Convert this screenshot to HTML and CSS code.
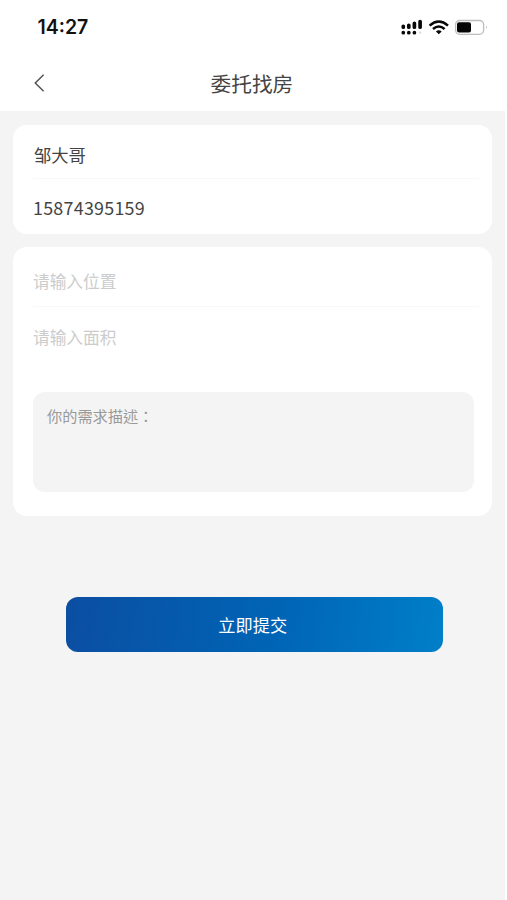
FILE: index.html
```html
<!DOCTYPE html>
<html lang="zh-CN">
<head>
<meta charset="utf-8">
<title>委托找房</title>
<link rel="stylesheet" href="styles.css">
</head>
<body>
<div class="screen">
  <header class="top">
    <div class="status">
      <span class="time">14:27</span>
      <svg class="indicators" width="88" height="20" viewBox="0 0 88 20">
        <g stroke="#080808" stroke-width="3.7" stroke-linecap="round">
          <path d="M3.3 9.3v.9M8.8 8.3v1.9M14.4 6.4v3.8M20.1 4.6v5.6"/>
          <path d="M3.3 15.7h.01M8.8 15.7h.01M14.4 15.7h.01"/>
        </g>
        <circle cx="20.1" cy="15.7" r="1.2" fill="#ddd"/>
        <g fill="none" stroke="#080808" stroke-width="2.5">
          <path d="M29.6 8.6Q38.8 .4 48 8.6"/>
          <path d="M33 12Q38.8 7 44.6 12"/>
        </g>
        <path d="M35.9 14.4Q38.8 12.1 41.7 14.4L38.8 17.2Z" fill="#080808"/>
        <rect x="55.6" y="3.5" width="28" height="13.8" rx="4" fill="#fff" stroke="#bdbdbd" stroke-width="1.3"/>
        <rect x="57" y="5.2" width="14" height="10.4" rx="2" fill="#050505"/>
        <path d="M86 8.5q1.4 1.7 0 3.4z" fill="#999"/>
      </svg>
    </div>
    <nav class="nav">
      <svg class="back" width="12" height="20" viewBox="0 0 12 20">
        <path d="M10.6 1.8L2.3 10L10.6 18.2" fill="none" stroke="#555" stroke-width="1.5"/>
      </svg>
      <h1 class="title">委托找房</h1>
    </nav>
  </header>
  <form class="form">
    <section class="card contact">
      <input class="field name" type="text" value="邹大哥">
      <input class="field phone" type="text" value="15874395159">
    </section>
    <section class="card needs">
      <input class="field place" type="text" placeholder="请输入位置">
      <input class="field area" type="text" placeholder="请输入面积">
      <textarea class="desc" lang="zh-Hant" placeholder="你的需求描述："></textarea>
    </section>
    <button class="submit" type="button">立即提交</button>
  </form>
</div>
</body>
</html>
```

FILE: styles.css
```css
* { box-sizing: border-box; }

body {
  margin: 0;
  background: #fff;
  color: #444;
  font-family: "Noto Sans CJK SC", sans-serif;
  overflow: hidden;
}

.screen {
  width: 505px;
  height: 900px;
  background: #f4f4f4;
}

.top {
  height: 111px;
  background: #fff;
}

.status {
  display: flex;
  justify-content: space-between;
  align-items: center;
  height: 54px;
  padding: 0 17px 0 37.5px;
}

.time {
  font: 600 19.5px/24px Inter, sans-serif;
  color: #111;
}

.nav {
  display: flex;
  align-items: center;
  height: 58px;
  padding-left: 33px;
}

.title {
  margin: 0 0 0 165.5px;
  font-size: 20.7px;
  line-height: 30px;
  font-weight: 400;
  color: #444;
}

.form {
  display: flex;
  flex-direction: column;
  gap: 13px;
  padding: 14px 13.5px 0 13px;
}

.card {
  display: flex;
  flex-direction: column;
  padding: 0 13px 0 20px;
  background: #fff;
  border-radius: 14px;
}

.contact { height: 108.5px; }
.needs { height: 269px; }

.field {
  width: 100%;
  padding: 0;
  border: 0;
  outline: 0;
  background: none;
  font-family: inherit;
  font-size: 16.7px;
  color: #444;
}

.field::placeholder { color: #ccc; opacity: 1; }

.name {
  height: 54px;
  padding: 5px 0 0 1px;
  border-bottom: 1px solid #f8f8f8;
  font-size: 17.3px;
}

.phone {
  height: 54px;
  padding-top: 1px;
  font-size: 17.9px;
  letter-spacing: .25px;
}

.place {
  height: 60px;
  padding-top: 10px;
  border-bottom: 1px solid #f8f8f8;
}

.area {
  height: 62px;
  padding-bottom: 2px;
}

.desc {
  width: 441px;
  height: 100px;
  margin-top: 23.5px;
  padding: 11px 14px;
  border: 0;
  outline: 0;
  border-radius: 12px;
  background: #f4f4f4;
  font: 15.2px/24px "Noto Sans CJK TC", sans-serif;
  resize: none;
}

.desc::placeholder { color: #999; opacity: 1; }

.submit {
  width: 376.5px;
  height: 55px;
  margin: 68.5px 0 0 53px;
  padding: 0 3px 0 0;
  border: 0;
  border-radius: 12px;
  background: linear-gradient(97deg, #0b4ea2, #0064b5 55%, #007fc8);
  color: #fff;
  font: 17.2px/26px "Noto Sans CJK SC", sans-serif;
}
```
